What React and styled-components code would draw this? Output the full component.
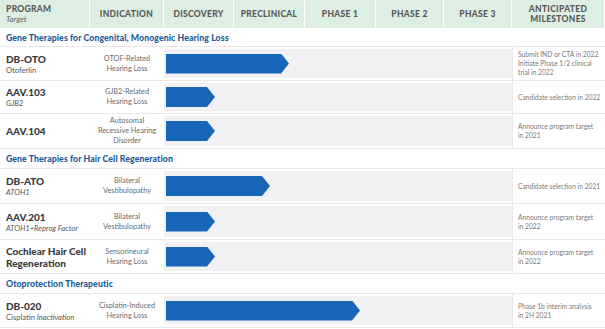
import React from "react";
import styled, { createGlobalStyle } from "styled-components";

const Global = createGlobalStyle`
  html, body { margin: 0; padding: 0; background: #fff; }
  *, *::before, *::after { box-sizing: border-box; }
  body { font-family: "Lato", "Open Sans", sans-serif; }
`;

const COLS = "90px 74px 70px 71px 71px 68px 68px 93px";

const Table = styled.div`
  width: 605px;
  display: grid;
  grid-template-columns: ${COLS};
  color: #444;
`;

const Head = styled.div`
  background: #ddefe2;
  height: 29px;
  border-right: 1.5px solid #fff;
  border-bottom: 1px solid #fff;
  display: flex;
  flex-direction: column;
  justify-content: center;
  align-items: ${(p) => (p.$left ? "flex-start" : "center")};
  padding: ${(p) => (p.$left ? "0 0 0 6px" : "0")};
  font-weight: 900;
  font-size: 8.5px;
  letter-spacing: 0.3px;
  color: #595959;
  text-align: center;
  line-height: 10px;
  &:last-child { border-right: none; }
`;

const HeadSub = styled.span`
  font-style: italic;
  font-weight: 400;
  font-size: 8px;
  letter-spacing: 0;
  color: #666;
`;

const Section = styled.div`
  grid-column: 1 / -1;
  height: ${(p) => p.$h}px;
  display: flex;
  align-items: center;
  padding-left: 6px;
  font-weight: 900;
  font-size: 8.7px;
  letter-spacing: 0.1px;
  color: #1d5b98;
  border-bottom: 1px solid #e9e9e9;
`;

const Cell = styled.div`
  height: ${(p) => p.$h}px;
  border-bottom: 1px solid #e9e9e9;
  display: flex;
  flex-direction: column;
  justify-content: center;
`;

const ProgCell = styled(Cell)`
  padding-left: 6px;
`;

const ProgName = styled.div`
  font-weight: 900;
  font-size: 10px;
  line-height: 12px;
  color: #3a3a3a;
`;

const ProgSub = styled.div`
  font-size: 7.6px;
  line-height: 10px;
  color: #555;
`;

const Gene = styled.i`
  font-style: italic;
`;

const IndCell = styled(Cell)`
  align-items: center;
  text-align: center;
  font-size: 7.3px;
  line-height: 10px;
  color: #6a6a6a;
`;

const Pipe = styled(Cell)`
  grid-column: 3 / 8;
  padding: 2px 0;
`;

const Band = styled.div`
  flex: 1;
  background: #f1f1f3;
  display: flex;
  align-items: center;
  padding-left: 2px;
`;

const Bar = styled.div`
  height: 20px;
  background: #1766b7;
  clip-path: polygon(0 0, calc(100% - 8px) 0, 100% 50%, calc(100% - 8px) 100%, 0 100%);
`;

const MileCell = styled(Cell)`
  border-left: 1px solid #e9e9e9;
  padding-left: 5px;
  font-size: 6.7px;
  line-height: 8.7px;
  color: #7a7a7a;
`;

const groups = [
  {
    title: "Gene Therapies for Congenital, Monogenic Hearing Loss",
    h: 18,
    rows: [
      { name: "DB-OTO", sub: <>Otoferlin</>, ind: ["OTOF-Related", "Hearing Loss"], bar: 123, mile: ["Submit IND or CTA in 2022", "Initiate Phase 1/2 clinical", "trial in 2022"], h: 34 },
      { name: "AAV.103", sub: <Gene>GJB2</Gene>, ind: ["GJB2-Related", "Hearing Loss"], bar: 49, mile: ["Candidate selection in 2022"], h: 33 },
      { name: "AAV.104", sub: null, ind: ["Autosomal", "Recessive Hearing", "Disorder"], bar: 49, mile: ["Announce program target", "in 2021"], h: 35 },
    ],
  },
  {
    title: "Gene Therapies for Hair Cell Regeneration",
    h: 20,
    rows: [
      { name: "DB-ATO", sub: <Gene>ATOH1</Gene>, ind: ["Bilateral", "Vestibulopathy"], bar: 104, mile: ["Candidate selection in 2021"], h: 35 },
      { name: "AAV.201", sub: <Gene>ATOH1+Reprog Factor</Gene>, ind: ["Bilateral", "Vestibulopathy"], bar: 49, mile: ["Announce program target", "in 2022"], h: 36 },
      { name: "Cochlear Hair Cell Regeneration", sub: null, ind: ["Sensorineural", "Hearing Loss"], bar: 49, mile: ["Announce program target", "in 2022"], h: 34 },
    ],
  },
  {
    title: "Otoprotection Therapeutic",
    h: 20,
    rows: [
      { name: "DB-020", sub: <>Cisplatin <Gene>Inactivation</Gene></>, ind: ["Cisplatin-Induced", "Hearing Loss"], bar: 194, mile: ["Phase 1b interim analysis", "in 2H 2021"], h: 34 },
    ],
  },
];

const lines = (arr) => arr.map((t, i) => <div key={i}>{t}</div>);

export default function App() {
  return (
    <>
      <Global />
      <Table>
        <Head $left>
          <span>PROGRAM</span>
          <HeadSub>Target</HeadSub>
        </Head>
        <Head>INDICATION</Head>
        <Head>DISCOVERY</Head>
        <Head>PRECLINICAL</Head>
        <Head>PHASE 1</Head>
        <Head>PHASE 2</Head>
        <Head>PHASE 3</Head>
        <Head>
          <span>ANTICIPATED</span>
          <span>MILESTONES</span>
        </Head>
        {groups.map((g) => (
          <React.Fragment key={g.title}>
            <Section $h={g.h}>{g.title}</Section>
            {g.rows.map((r) => (
              <React.Fragment key={r.name}>
                <ProgCell $h={r.h}>
                  <ProgName>{r.name}</ProgName>
                  {r.sub && <ProgSub>{r.sub}</ProgSub>}
                </ProgCell>
                <IndCell $h={r.h}>{lines(r.ind)}</IndCell>
                <Pipe $h={r.h}>
                  <Band>
                    <Bar style={{ width: r.bar }} />
                  </Band>
                </Pipe>
                <MileCell $h={r.h}>{lines(r.mile)}</MileCell>
              </React.Fragment>
            ))}
          </React.Fragment>
        ))}
      </Table>
    </>
  );
}
